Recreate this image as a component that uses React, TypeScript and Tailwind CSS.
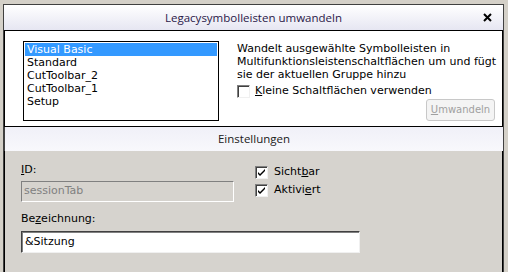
import React from "react";

const font = { fontFamily: '"DejaVu Sans", Verdana, sans-serif' };
const titleFont = { fontFamily: '"Open Sans", "Noto Sans", sans-serif' };

function Check({ checked }: { checked?: boolean }) {
  return (
    <div className="w-[13px] h-[13px] shrink-0 bg-white border border-t-[#808080] border-l-[#808080] border-r-[#f0f0f0] border-b-[#f0f0f0] shadow-[inset_1px_1px_0_#404040] flex items-center justify-center">
      {checked && (
        <svg width="9" height="9" viewBox="0 0 9 9">
          <path d="M1 4 L3 6 L8 1 L8 3 L3 8 L1 6 Z" fill="#000" />
        </svg>
      )}
    </div>
  );
}

export default function App() {
  const items = ["Visual Basic", "Standard", "CutToolbar_2", "CutToolbar_1", "Setup"];
  return (
    <div className="w-[508px] h-[272px] bg-[#d4d0c8] pt-[4px] pl-[3px] pr-[4px] overflow-hidden text-[11px] text-black" style={font}>
      <div className="h-[268px] flex flex-col border-l border-t border-r border-[#404040]">
        {/* title */}
        <div className="h-[26px] shrink-0 flex items-center justify-center relative bg-gradient-to-b from-[#ffffff] to-[#e6e6f2] border-b border-black">
          <span className="text-[11.5px] text-[#2a1848]" style={titleFont}>Legacysymbolleisten umwandeln</span>
          <span className="absolute right-[8px] top-[4px] w-[16px] h-[16px] flex items-center justify-center">
            <svg width="9" height="9" viewBox="0 0 9 9">
              <path d="M1 1 L8 8 M8 1 L1 8" stroke="#000" strokeWidth="2" />
            </svg>
          </span>
        </div>
        {/* top section */}
        <div className="h-[96px] shrink-0 bg-white border-l border-r border-b border-black flex pl-[18px] pt-[10px]">
          <div className="w-[196px] h-[80px] border border-black bg-white pt-[1px] px-[1px]">
            {items.map((it, i) => (
              <div
                key={it}
                className={
                  "h-[13px] leading-[13px] pl-[2px] " +
                  (i === 0 ? "bg-[#3399ff] text-white" : "")
                }
              >
                {it}
              </div>
            ))}
          </div>
          <div className="ml-[18px] flex flex-col pt-[1px]">
            <div className="leading-[13px] w-[264px]">
              Wandelt ausgewählte Symbolleisten in Multifunktionsleistenschaltflächen um und fügt sie der aktuellen Gruppe hinzu
            </div>
            <div className="flex items-center mt-[2px]">
              <Check />
              <span className="ml-[5px]">
                <u>K</u>leine Schaltflächen verwenden
              </span>
            </div>
            <div className="flex justify-end mt-[-1px] pr-[6px]">
              <div className="w-[69px] h-[22px] border border-[#c8c8c8] rounded-[3px] bg-[#f4f4f4] flex items-center justify-center text-[#a0a0a0] text-[10px]">
                <span><u>U</u>mwandeln</span>
              </div>
            </div>
          </div>
        </div>
        {/* settings header */}
        <div className="h-[24px] shrink-0 flex items-center justify-center bg-gradient-to-b from-[#f0f0f8] to-[#f8f8fc] border-l border-[#404040] text-[11.5px] text-[#202020]" style={titleFont}>
          Einstellungen
        </div>
        {/* settings */}
        <div className="flex-1 bg-[#d6d3ce] border-l border-r border-black flex pl-[16px] pt-[12px]">
          <div className="flex flex-col w-[340px]">
            <div className="leading-[13px]"><u>I</u>D:</div>
            <div className="mt-[5px] w-[213px] h-[21px] bg-[#d6d3ce] border border-t-[#808080] border-l-[#808080] border-r-[#ffffff] border-b-[#ffffff] flex items-center pl-[2px] text-[#808080]">
              sessionTab
            </div>
            <div className="mt-[10px] leading-[13px]">Be<u>z</u>eichnung:</div>
            <div className="mt-[6px] w-[339px] h-[22px] bg-white border border-t-[#404040] border-l-[#404040] border-r-[#f0f0f0] border-b-[#f0f0f0] shadow-[inset_1px_1px_0_#808080] flex items-center pl-[3px]">
              &amp;Sitzung
            </div>
          </div>
          <div className="flex flex-col ml-[-106px] pt-[3px]">
            <div className="flex items-center h-[13px]">
              <Check checked />
              <span className="ml-[6px]">Sicht<u>b</u>ar</span>
            </div>
            <div className="flex items-center h-[13px] mt-[5px]">
              <Check checked />
              <span className="ml-[6px]">Aktivi<u>e</u>rt</span>
            </div>
          </div>
        </div>
      </div>
    </div>
  );
}
